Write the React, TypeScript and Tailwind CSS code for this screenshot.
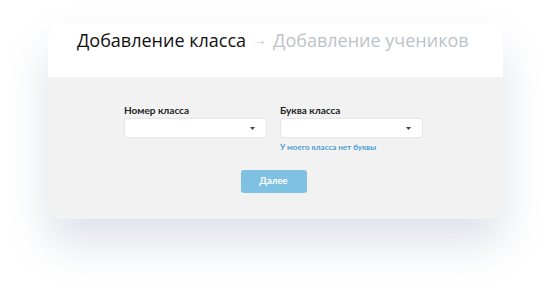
import React from 'react';

function Select() {
  return (
    <div className="h-[20px] w-[143px] bg-white border border-[#e6e6e6] rounded-[3px] flex items-center justify-end pr-[11px]">
      <svg width="5" height="3" viewBox="0 0 5 3">
        <path d="M0 0h5L2.5 3z" fill="#444" />
      </svg>
    </div>
  );
}

export default function App() {
  return (
    <div className="w-[552px] h-[292px] bg-white pt-[23px] pl-[48px]">
      <div className="w-[455px] h-[196px] rounded-[16px] overflow-hidden flex flex-col shadow-[0_24px_44px_rgba(70,90,140,0.18)]">
        <div className="h-[54px] bg-white pl-[29px] pt-[4px] text-[18px] leading-[26px] flex items-start" style={{ fontFamily: '"Open Sans", sans-serif' }}>
          <span className="text-[#111]">Добавление класса</span>
          <span className="text-[#c6ccd1] mx-[6px] text-[15px] leading-[24px]">→</span>
          <span className="text-[#bcc3c9]">Добавление учеников</span>
        </div>
        <div className="flex-1 bg-[#f2f2f2] flex flex-col items-center pt-[26px] pr-[4px]" style={{ fontFamily: 'Lato, sans-serif' }}>
          <div className="flex gap-[13px]">
            <div className="flex flex-col">
              <div className="text-[10px] font-bold text-[#222] leading-[14px] mb-[1px]">Номер класса</div>
              <Select />
            </div>
            <div className="flex flex-col">
              <div className="text-[10px] font-bold text-[#222] leading-[14px] mb-[1px]">Буква класса</div>
              <Select />
              <div className="text-[8px] font-bold text-[#4a9fd5] leading-[10px] mt-[4px]">У моего класса нет буквы</div>
            </div>
          </div>
          <button className="mt-[18px] w-[66px] h-[23px] rounded-[3px] bg-[#7fc1e3] text-white text-[9.5px] font-bold">
            Далее
          </button>
        </div>
      </div>
    </div>
  );
}
